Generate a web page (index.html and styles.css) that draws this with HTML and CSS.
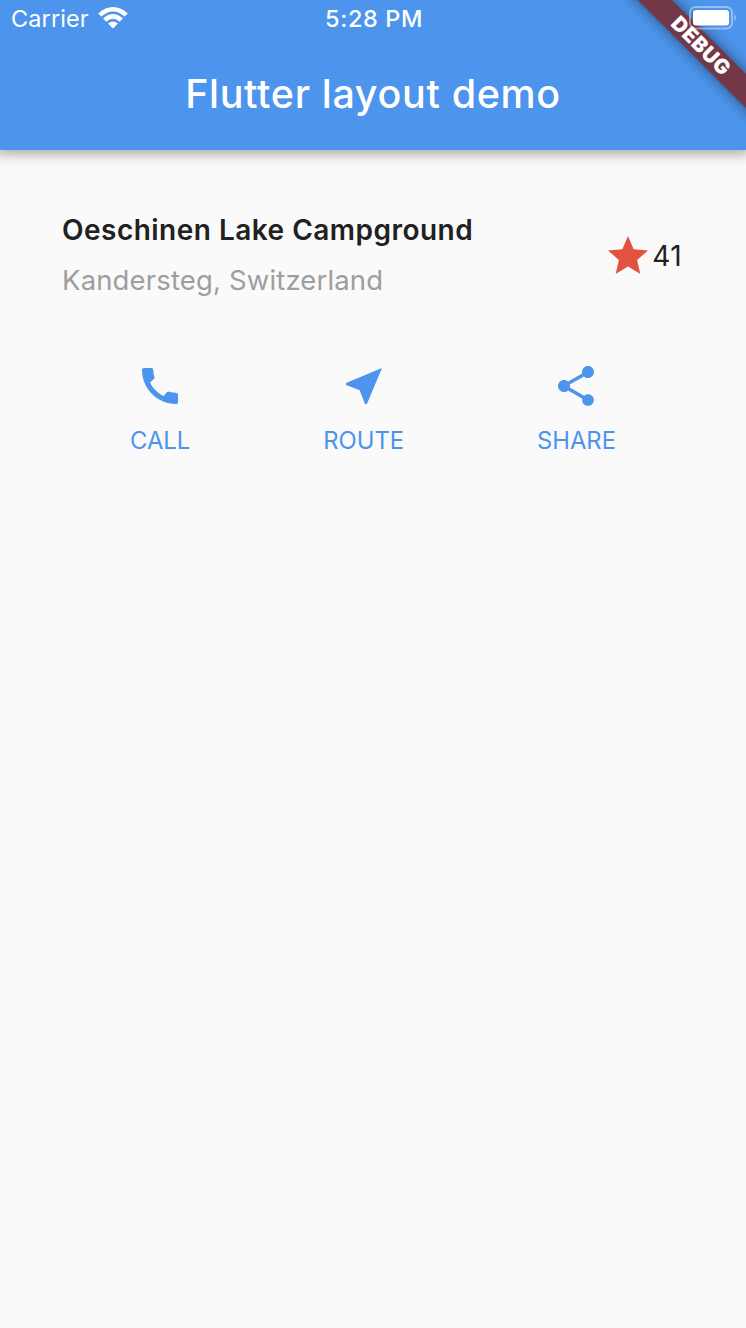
FILE: index.html
```html
<!DOCTYPE html>
<html lang="en">
<head>
  <meta charset="UTF-8" />
  <meta name="viewport" content="width=device-width, initial-scale=1.0"/>
  <title>Flutter layout demo</title>
  <link rel="stylesheet" href="styles.css">
</head>
<body>

<header class="app-bar">
  <div class="status-bar">
    <div class="carrier">
      <span>Carrier</span>
      <svg class="wifi" viewBox="0 0 30 22">
        <path d="M0.2 6.4 Q15 -6.4 29.8 6.4 L26.7 9.6 Q15 -0.8 3.3 9.6 Z"/>
        <path d="M5.1 11.4 Q15 2.8 24.9 11.4 L21.7 14.7 Q15 8.8 8.3 14.7 Z"/>
        <path d="M10 16.5 Q15 12.4 20 16.5 L15 21.6 Z"/>
      </svg>
    </div>
    <div class="time">5:28 PM</div>
    <div class="battery-box">
      <svg class="battery" viewBox="0 0 48 24">
        <rect class="battery-case" x="1" y="1" width="42" height="21.4" rx="5.5"/>
        <rect x="4" y="4" width="36" height="15.4" rx="3"/>
        <path class="battery-cap" d="M45.5 8 Q48.2 11.7 45.5 15.4 Z"/>
      </svg>
    </div>
  </div>
  <h1>Flutter layout demo</h1>
  <div class="banner-clip">
    <div class="debug-banner"><span>DEBUG</span></div>
  </div>
</header>

<main>
  <section class="title-section">
    <div class="place">
      <h2>Oeschinen Lake Campground</h2>
      <p>Kandersteg, Switzerland</p>
    </div>
    <div class="rating">
      <svg class="icon" viewBox="0 0 24 24"><path d="M12 17.27L18.18 21l-1.64-7.03L22 9.24l-7.19-.61L12 2 9.19 8.63 2 9.24l5.46 4.73L5.82 21z"/></svg>
      <span>41</span>
    </div>
  </section>

  <section class="button-section">
    <div class="action">
      <svg class="icon" viewBox="0 0 24 24"><path d="M20.01 15.38c-1.23 0-2.42-.2-3.53-.56-.35-.12-.74-.03-1.01.24l-1.57 1.97c-2.83-1.35-5.48-3.9-6.89-6.83l1.95-1.66c.27-.28.35-.67.24-1.02-.37-1.11-.56-2.3-.56-3.53 0-.54-.45-.99-.99-.99H4.19C3.65 3 3 3.24 3 3.99 3 13.28 10.73 21 20.01 21c.71 0 .99-.63.99-1.18v-3.45c0-.54-.45-.99-.99-.99z"/></svg>
      <span>CALL</span>
    </div>
    <div class="action">
      <svg class="icon" viewBox="0 0 24 24"><path d="M21 3L3 10.53v.98l6.84 2.65L12.48 21h.98L21 3z"/></svg>
      <span>ROUTE</span>
    </div>
    <div class="action">
      <svg class="icon" viewBox="0 0 24 24"><path d="M18 16.08c-.76 0-1.44.3-1.96.77L8.91 12.7c.05-.23.09-.46.09-.7s-.04-.47-.09-.7l7.05-4.11c.54.5 1.25.81 2.04.81 1.66 0 3-1.34 3-3s-1.34-3-3-3-3 1.34-3 3c0 .24.04.47.09.7L8.04 9.81C7.5 9.31 6.79 9 6 9c-1.66 0-3 1.34-3 3s1.34 3 3 3c.79 0 1.5-.31 2.04-.81l7.12 4.16c-.05.21-.08.43-.08.65 0 1.61 1.31 2.92 2.92 2.92 1.61 0 2.92-1.31 2.92-2.92s-1.31-2.92-2.92-2.92z"/></svg>
      <span>SHARE</span>
    </div>
  </section>
</main>

</body>
</html>
```
FILE: styles.css
```css
* {
  box-sizing: border-box;
}

body {
  margin: 0;
  min-height: 1328px;
  font-family: Inter, 'Liberation Sans', sans-serif;
  background: #fafafa;
  color: #212121;
  overflow-x: hidden;
}

h1, h2, p {
  margin: 0;
}

.app-bar {
  position: relative;
  height: 150px;
  background: #4c94ec;
  color: white;
  box-shadow: 0 0 12px 4px rgba(0, 0, 0, 0.33);
}

.status-bar {
  display: grid;
  grid-template-columns: 1fr auto 1fr;
  height: 36px;
  padding: 0 9px 0 11px;
  align-items: center;
  font-size: 23.5px;
}

.carrier {
  display: flex;
  align-items: center;
  gap: 9px;
  letter-spacing: 0.1px;
}

.wifi {
  width: 30px;
  height: 22px;
  fill: white;
}

.time {
  font-weight: 500;
  letter-spacing: 0.6px;
}

.battery-box {
  position: relative;
  z-index: 2;
  display: flex;
  justify-content: flex-end;
}

.battery {
  width: 48px;
  height: 24px;
  fill: white;
}

.battery .battery-case {
  fill: none;
  stroke: white;
  stroke-width: 2;
  opacity: 0.4;
}

.battery .battery-cap {
  opacity: 0.5;
}

h1 {
  height: 114px;
  line-height: 117px;
  text-align: center;
  font-size: 39.5px;
  font-weight: 500;
  letter-spacing: 0.65px;
}

.banner-clip {
  position: absolute;
  top: 0;
  right: 0;
  width: 150px;
  height: 150px;
  overflow: hidden;
}

.debug-banner {
  position: absolute;
  top: 34px;
  right: -55px;
  width: 200px;
  height: 24px;
  line-height: 24px;
  transform: rotate(45deg);
  background: #733848;
  box-shadow: 0 0 14px rgba(0, 0, 0, 0.5);
  text-align: center;
  font-size: 20.5px;
  font-weight: 900;
  letter-spacing: 0.6px;
}

.title-section {
  display: flex;
  align-items: center;
  justify-content: space-between;
  padding: 64px 64px 64px 62px;
  height: 212px;
}

.place {
  padding-bottom: 2px;
}

.place h2 {
  font-size: 28px;
  font-weight: 600;
  line-height: 34px;
  margin-bottom: 16px;
  letter-spacing: 0.48px;
}

.place p {
  font-size: 27.5px;
  line-height: 34px;
  letter-spacing: 0.15px;
  color: #9e9e9e;
}

.rating {
  display: flex;
  align-items: center;
  font-size: 28px;
  letter-spacing: 0.4px;
}

.icon {
  display: block;
  width: 48px;
  height: 48px;
  fill: #4c94ec;
}

.rating .icon {
  fill: #e15241;
}

.button-section {
  display: flex;
  justify-content: space-between;
  padding: 0 130px;
}

.action {
  display: flex;
  flex-direction: column;
  align-items: center;
  gap: 15px;
  color: #4c94ec;
  font-size: 23.8px;
  line-height: 31px;
}
```
